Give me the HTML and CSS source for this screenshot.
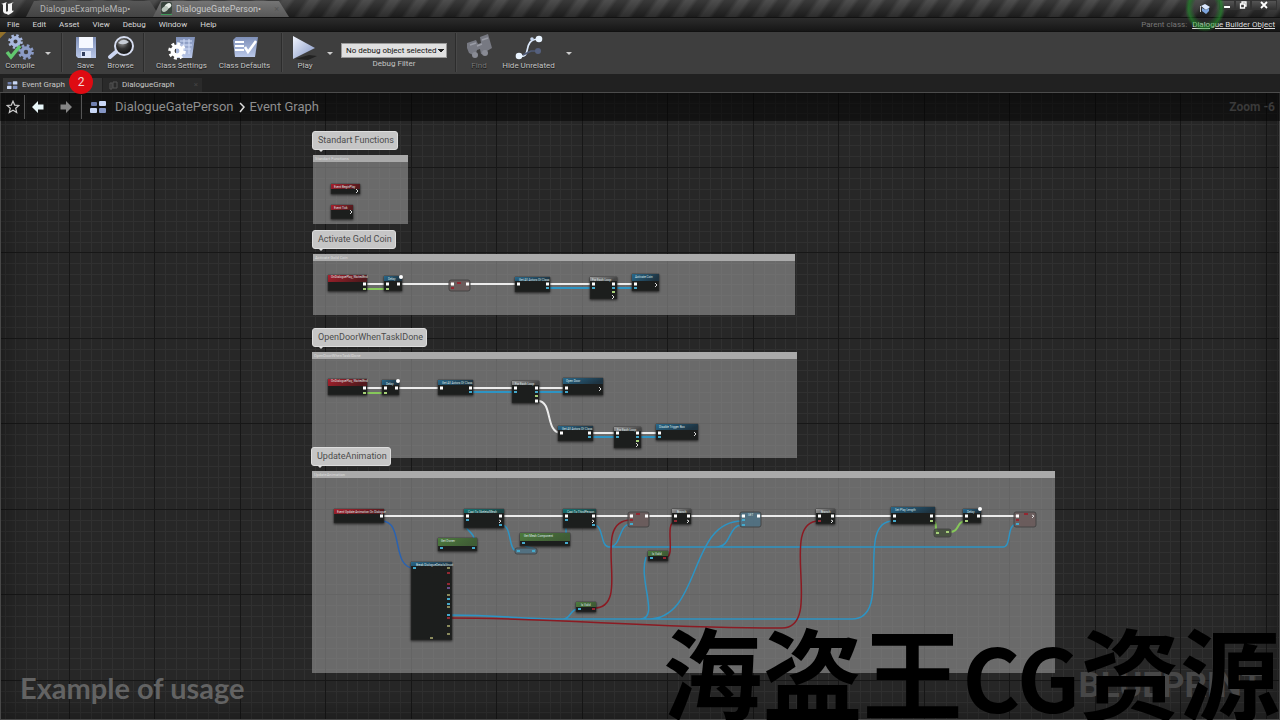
FILE: index.html
```html
<!DOCTYPE html>
<html lang="en">
<head>
<meta charset="utf-8">
<title>DialogueGatePerson</title>
<link rel="stylesheet" href="styles.css">
</head>
<body>
<svg class="defs" width="0" height="0" aria-hidden="true">
  <defs>
    <linearGradient id="steel" x1="0" y1="0" x2="1" y2="1"><stop offset="0" stop-color="#f2f6ff"/><stop offset="1" stop-color="#8194c4"/></linearGradient>
    <linearGradient id="steelDark" x1="0" y1="0" x2="0" y2="1"><stop offset="0" stop-color="#7f90b8"/><stop offset="1" stop-color="#b9c7e8"/></linearGradient>
    <radialGradient id="lens" cx=".4" cy=".3" r=".7"><stop offset="0" stop-color="#999"/><stop offset=".5" stop-color="#333"/><stop offset="1" stop-color="#111"/></radialGradient>
    <symbol id="gear" viewBox="-10 -10 20 20">
      <circle r="5" fill="none" stroke="currentColor" stroke-width="4.5"/>
      <circle r="8" fill="none" stroke="currentColor" stroke-width="3.6" stroke-dasharray="3.2 3.08"/>
    </symbol>
    <symbol id="blocks" viewBox="0 0 17 13">
      <rect x="1" y="1" width="6" height="4" rx="1" fill="#6f7fae"/><rect x="9" y="0" width="7" height="5" rx="1" fill="#c9d7f6"/>
      <rect x="0" y="7" width="7" height="5" rx="1" fill="#c9d7f6"/><rect x="9" y="7" width="7" height="5" rx="1" fill="#8495c4"/>
    </symbol>
  </defs>
</svg>

<header class="titlebar">
  <svg class="logo" viewBox="0 0 18 18"><path d="M1 4C3 3 5 3 7 2c-1 1-1 2-1 3v6c0 1 1 1 2 0V5c0-1 0-1-1-1 2 0 4-1 7-2-2 1-2 2-2 3v5c0 1 1 1 2 .5C13 13 10 14 8 15l-1-1c-2 0-4-1-4-3V5C3 4 2 4 1 4z" fill="#f4f4f4"/></svg>
  <div class="doc-tabs">
    <button class="doc-tab">DialogueExampleMap•</button>
    <button class="doc-tab active">
      <svg width="13" height="15" viewBox="0 0 13 15"><rect x="1" y="1" width="11" height="12" rx="2" fill="#38443c"/><ellipse cx="8" cy="5" rx="3.5" ry="2.5" fill="#e9efe9" transform="rotate(-35 8 5)"/><ellipse cx="5" cy="8" rx="3.5" ry="2.5" fill="#b8c4ba" transform="rotate(-35 5 8)"/><path d="M1 13.5h11" stroke="#3d9a58"/></svg>
      <span>DialogueGatePerson•</span><span class="tab-close">×</span>
    </button>
  </div>
  <div class="halo"><svg width="12" height="12" viewBox="0 0 12 12"><path d="M2 3l4-2 5 3-4 3z" fill="#dbe8ff"/><path d="M3 5v3l4 3 3-3V5L7 7z" fill="#7da4dc"/><path d="M1.500 3v6" stroke="#ccc"/></svg></div>
  <div class="win-buttons">
    <button aria-label="Minimize"><svg width="10" height="8"><path d="M2 6h6" stroke="#fff" stroke-width="2"/></svg></button>
    <button aria-label="Restore"><svg width="10" height="8"><path d="M4 2.5V1h4v4H6.500M2.500 3h4v4h-4z" stroke="#fff" fill="none" stroke-width="1.300"/></svg></button>
    <button class="wide" aria-label="Close"><svg width="10" height="8"><path d="M2 1l6 6M8 1L2 7" stroke="#fff" stroke-width="1.800"/></svg></button>
  </div>
</header>

<nav class="menubar">
  <button>File</button><button>Edit</button><button>Asset</button><button>View</button><button>Debug</button><button>Window</button><button>Help</button>
  <p class="parent">Parent class: <a href="#">Dialogue Builder Object</a></p>
</nav>

<div class="toolbar">
  <button class="tool compile">
    <svg width="32" height="28" viewBox="0 0 32 28"><g color="#a9b9df"><use href="#gear" x="4" y="1" width="15" height="15"/></g><g color="#8b9bc6"><use href="#gear" x="14" y="11" width="16" height="16"/></g><path d="M3 19l4 5 9-11" fill="none" stroke="#62c76f" stroke-width="3.500"/></svg>
    Compile</button>
  <button class="drop" aria-label="Compile options"></button>
  <i class="sep"></i>
  <button class="tool save">
    <svg width="32" height="28" viewBox="0 0 32 28"><path d="M6 4h20v21H8l-2-2z" fill="url(#steelDark)"/><path d="M9 4h14v11H9z" fill="#f5f8ff"/><path d="M11 18h10v7H11z" fill="#dfe7fa"/><path d="M12 19h3v4h-3z" fill="#33405f"/></svg>
    Save</button>
  <button class="tool save">
    <svg width="32" height="28" viewBox="0 0 32 28"><path d="M12 18l-7 6" stroke="#cbd6f2" stroke-width="4" stroke-linecap="round"/><circle cx="19" cy="13" r="9" fill="url(#lens)" stroke="#d6ddf0" stroke-width="2"/><path d="M13 10q5-6 11-1-5 4-11 1z" fill="#c8cdd6"/></svg>
    Browse</button>
  <i class="sep"></i>
  <button class="tool settings">
    <svg width="32" height="28" viewBox="0 0 32 28"><path d="M10 4h19l-3 21H10z" fill="url(#steelDark)"/><path d="M14 8h12M14 12h12M14 16h11M18 6v15M23 6v15" stroke="#d2ddf7" stroke-width="1"/><g color="#fff"><use href="#gear" x="2" y="9" width="18" height="18"/></g></svg>
    Class Settings</button>
  <button class="tool settings">
    <svg width="32" height="28" viewBox="0 0 32 28"><path d="M4 7l3-3h22l-3 20H6z" fill="url(#steelDark)"/><path d="M6 9h9M6 13h9M6 17h9" stroke="#fff" stroke-width="2"/><path d="M16 14l3 5 8-11" stroke="#fff" stroke-width="2.500" fill="none"/></svg>
    Class Defaults</button>
  <i class="sep"></i>
  <button class="tool play">
    <svg width="32" height="28" viewBox="0 0 32 28"><path d="M6 26l14-4 8 1-9 4z" fill="#222"/><path d="M4 3l22 12L4 26z" fill="url(#steel)"/></svg>
    Play</button>
  <button class="drop play-drop" aria-label="Play options"></button>
  <div class="filter">
    <select id="debug"><option>No debug object selected</option></select>
    <label for="debug">Debug Filter</label>
  </div>
  <i class="sep"></i>
  <button class="tool find" disabled>
    <svg width="32" height="28" viewBox="0 0 32 28"><path d="M4 10l9-3 2 4 3-1-1-6 8-3 4 14-5 3-1 4-5-1-1-5-3 1-2 6-6-3-2-5z" fill="#777982"/><path d="M7 12l6-2M19 7l6-2M14 13l5-2" stroke="#9a9ca5" stroke-width="1.500"/><circle cx="12" cy="22" r="3" fill="#898b94"/><circle cx="22" cy="20" r="3" fill="#898b94"/></svg>
    Find</button>
  <button class="tool hide">
    <svg width="32" height="28" viewBox="0 0 32 28"><path d="M6 23c14 3 2-17 20-17" fill="none" stroke="#dce9fb" stroke-width="1.700"/><path d="M10 22l8-4h8" stroke="#4f5a76" fill="none" stroke-width="1.700"/><circle cx="6" cy="23" r="3.300" fill="#e9f4ff"/><circle cx="26" cy="6" r="3.300" fill="#e9f4ff"/><circle cx="19" cy="6" r="1.800" fill="#c6d6ef"/><circle cx="25" cy="18" r="3" fill="#55607e"/></svg>
    Hide Unrelated</button>
  <button class="drop" aria-label="Hide options"></button>
</div>

<div class="graph-tabs">
  <button class="graph-tab current"><svg width="11" height="9"><use href="#blocks"/></svg>Event Graph</button>
  <button class="graph-tab"><svg width="9" height="9"><path d="M1 2h2v6H1zM4 1h4v6H4z" fill="none" stroke="#555"/></svg>DialogueGraph<span>×</span></button>
  <span class="badge">2</span>
</div>

<main class="graph">
  <svg class="grid" width="100%" height="100%">
    <defs><pattern id="g" x="69" y="74" width="171" height="171" patternUnits="userSpaceOnUse">
      <path class="minor" d="M11.500 0v171M22.500 0v171M32.500 0v171M43.500 0v171M54.500 0v171M64.500 0v171M75.500 0v171M96.500 0v171M107.500 0v171M117.500 0v171M128.500 0v171M139.500 0v171M149.500 0v171M160.500 0v171M0 11.500h171M0 22.500h171M0 32.500h171M0 43.500h171M0 54.500h171M0 64.500h171M0 75.500h171M0 96.500h171M0 107.500h171M0 117.500h171M0 128.500h171M0 139.500h171M0 149.500h171M0 160.500h171"/>
      <path class="major" d="M.500 0v171M85.500 0v171M0 .500h171M0 85.500h171"/>
    </pattern></defs>
    <rect width="100%" height="100%" fill="url(#g)"/>
  </svg>

  <section class="comment c1"><h2>Standart Functions</h2></section>
  <section class="comment c2"><h2>Activate Gold Coin</h2></section>
  <section class="comment c3"><h2>OpenDoorWhenTaskIDone</h2></section>
  <section class="comment c4"><h2>UpdateAnimation</h2></section>

  <svg class="nodes" width="1280" height="627" viewBox="0 93 1280 627">
    <defs>
      <linearGradient id="hr" x2="1" y2=".3"><stop offset="0" stop-color="#a8202c"/><stop offset="1" stop-color="#521a1d"/></linearGradient>
      <linearGradient id="hb" x2="1" y2=".3"><stop offset="0" stop-color="#28688a"/><stop offset="1" stop-color="#1e3442"/></linearGradient>
      <linearGradient id="ht" x2="1" y2=".3"><stop offset="0" stop-color="#137070"/><stop offset="1" stop-color="#1c4545"/></linearGradient>
      <linearGradient id="hg" x2="1" y2=".3"><stop offset="0" stop-color="#4c7a3d"/><stop offset="1" stop-color="#3f5c35"/></linearGradient>
      <linearGradient id="hw" x2="1" y2=".3"><stop offset="0" stop-color="#999"/><stop offset="1" stop-color="#444"/></linearGradient>
    </defs>
    <g class="wire green"><path d="M366 289H386M366 393H385M933 521C938 521 934 532 938 532M950 532C960 532 956 521 966 521"/></g>
    <g class="wire blue"><path d="M549 288H592M616 288H635M472 392H514M538 392H566M592 437H616M640 437H659"/></g>
    <g class="wire thin blue">
      <path d="M467 521C462 532 476 530 474 543M502 525C512 525 508 551 517 551M534 551C538 546 522 549 524 543M566 521V540"/>
      <path d="M594 525C604 525 600 547 609 547H1003C1012 547 1006 524 1017 524M609 547C622 547 618 524 631 524M716 547C732 547 728 525 742 525"/>
      <path d="M449 615C500 615 520 619 560 619H852C894 619 854 521 893 521M563 619C571 619 570 609 578 609M640 619C660 619 638 580 646 557M648 619C702 619 688 521 742 521"/>
    </g>
    <g class="wire thin red"><path d="M449 618C560 618 650 628 782 628C825 628 777 521 819 521M594 608C634 608 588 520 631 520M666 557C676 557 664 522 675 522"/></g>
    <path class="wire thin navy" d="M382 521C404 521 391 568 414 568"/>
    <path class="wire exec" d="M366 284H387M399 284H452M467 284H518M548 284H592M615 284H635M366 388H385M397 388H441M471 388H515M537 388H566M538 401C553 401 545 433 561 433M591 433H616M639 433H659M382 516H466M502 516H566M594 516H631M646 516H675M690 516H742M759 516H819M833 516H893M933 516H966M978 516H1017"/>

    <g class="bodies">
      <path d="M331 184h29v10h-29zM331 205h22v14h-22zM328 275h39v16h-39zM384 276h18v15h-18zM515 277h35v15h-35zM590 277h27v22h-27zM632 274h27v17h-27z"/>
      <path d="M328 379h39v16h-39zM382 380h17v15h-17zM438 380h35v15h-35zM512 381h27v22h-27zM563 378h40v17h-40zM558 426h35v15h-35zM614 427h27v21h-27zM656 424h42v16h-42z"/>
      <path d="M334 509h50v14h-50zM464 509h40v19h-40zM438 538h39v13h-39zM520 533h50v13h-50zM411 562h41v78h-41zM563 509h33v19h-33zM672 509h19v15h-19zM816 509h19v15h-19zM891 507h44v17h-44zM963 509h18v14h-18zM648 551h20v10h-20zM576 602h20v10h-20z"/>
    </g>
    <path fill="url(#hr)" d="M331 184h29v5h-29z"/><path fill="url(#hr)" d="M331 205h22v5h-22z"/>
    <path fill="url(#hr)" d="M328 275h39v7h-39z"/><path fill="url(#hr)" d="M328 379h39v7h-39z"/><path fill="url(#hr)" d="M334 509h50v5h-50z"/>
    <path fill="url(#hb)" d="M384 276h18v5h-18z"/><path fill="url(#hb)" d="M515 277h35v4h-35z"/><path fill="url(#hb)" d="M632 274h27v7h-27z"/>
    <path fill="url(#hb)" d="M382 380h17v5h-17z"/><path fill="url(#hb)" d="M438 380h35v5h-35z"/><path fill="url(#hb)" d="M563 378h40v6h-40z"/>
    <path fill="url(#hb)" d="M558 426h35v4h-35z"/><path fill="url(#hb)" d="M656 424h42v6h-42z"/><path fill="url(#hb)" d="M411 562h41v4h-41z"/>
    <path fill="url(#hb)" d="M891 507h44v6h-44z"/><path fill="url(#hb)" d="M963 509h18v4h-18z"/>
    <path fill="url(#ht)" d="M464 509h40v4h-40z"/><path fill="url(#ht)" d="M563 509h33v4h-33z"/>
    <path fill="url(#hg)" d="M438 538h39v8h-39z"/><path fill="url(#hg)" d="M520 533h50v8h-50z"/><path fill="url(#hg)" d="M648 551h20v5h-20z"/><path fill="url(#hg)" d="M576 602h20v5h-20z"/>
    <path fill="url(#hw)" d="M590 277h27v4h-27z"/><path fill="url(#hw)" d="M512 381h27v4h-27z"/><path fill="url(#hw)" d="M614 427h27v4h-27z"/><path fill="url(#hw)" d="M672 509h19v4h-19z"/><path fill="url(#hw)" d="M816 509h19v4h-19z"/>
    <g class="set"><rect class="r" x="449" y="280" width="21" height="11" rx="2"/><rect class="r" x="628" y="512" width="21" height="15" rx="2"/><rect class="b" x="740" y="512" width="21" height="15" rx="2"/><rect class="r" x="1014" y="512" width="22" height="15" rx="2"/><rect class="b" x="515" y="548" width="22" height="6" rx="2"/><rect class="g" x="934" y="529" width="17" height="8" rx="2"/></g>

    <path class="pin exec" d="M363 284h3M386 284h3M397 284h3M451 284h3M466 284h3M517 284h3M546 284h3M592 284h3M612 284h3M634 284h3M363 388h3M384 388h3M395 388h3M440 388h3M469 388h3M514 388h3M535 388h3M535 401h3M565 388h3M560 433h3M588 433h3M616 433h3M636 433h3M658 433h3M380 516h3M466 516h3M499 516h3M565 516h3M592 516h3M630 516h3M645 516h3M674 516h3M687 516h3M742 516h3M757 516h3M818 516h3M831 516h3M893 516h3M930 516h3M965 516h3M977 516h3M1016 516h3"/>
    <path class="arrow" d="M356 189l2 2-2 2M350 210l2 2-2 2M612 295l2 2-2 2M655 283l2 2-2 2M599 387l2 2-2 2M636 443l2 2-2 2M694 432l2 2-2 2M499 520l2 1-2 2M592 520l2 1-2 2M687 520l2 1-2 2M831 520l2 1-2 2M1032 515l2 1-2 2"/>
    <path class="pin cyan" d="M546 288h3M592 288h3M612 288h3M634 288h3M469 392h3M514 392h3M535 392h3M565 392h3M588 437h3M616 437h3M636 437h3M658 437h3M466 520h3M499 525h3M565 520h3M592 525h3M630 524h3M742 520h3M742 525h3M893 521h3M472 548h3M440 548h3M522 543h3M565 543h3M517 551h3M532 551h3M650 558h3M578 609h3M447 615h3M447 599h3M447 604h3M413 568h3M1016 524h3"/>
    <path class="pin lime" d="M363 289h3M386 289h3M363 393h3M384 393h3M930 521h3M965 521h3M936 533h3M946 532h3M612 292h3M535 396h3M636 441h3"/>
    <path class="pin olive" d="M447 568h3M447 595h3M447 607h3M447 626h3M447 634h3M430 638h3"/>
    <path class="pin crimson" d="M447 573h3M447 584h3M447 618h3M451 288h3M663 558h3M592 609h3M630 520h3M674 521h3M818 521h3M1016 520h3M457 283h4M636 514h4M1024 514h4"/>
    <path class="pin violet" d="M447 588h3"/>
    <g class="bead"><circle cx="401" cy="277" r="2"/><circle cx="398" cy="381" r="2"/><circle cx="980" cy="509" r="2"/></g>

    <g class="tiny">
      <text x="334" y="188">Event BeginPlay</text><text x="334" y="209">Event Tick</text>
      <text x="331" y="278">OnDialoguePlay_WaitedEnd</text><text x="388" y="280">Delay</text><text x="519" y="281">Get All Actors Of Class</text><text x="592" y="281">For Each Loop</text><text x="635" y="278">Activate Coin</text>
      <text x="331" y="382">OnDialoguePlay_WaitedEnd</text><text x="386" y="385">Delay</text><text x="442" y="384">Get All Actors Of Class</text><text x="515" y="385">For Each Loop</text><text x="566" y="382">Open Door</text>
      <text x="562" y="430">Get All Actors Of Class</text><text x="617" y="431">For Each Loop</text><text x="659" y="428">Disable Trigger Box</text>
      <text x="337" y="513">Event Update Animation On Dialogue</text><text x="468" y="513">Cast To SkeletalMesh</text><text x="567" y="513">Cast To ThirdPerson</text><text x="677" y="513">Branch</text><text x="821" y="513">Branch</text><text x="895" y="511">Set Play Length</text><text x="967" y="513">Delay</text>
      <text x="441" y="542">Get Owner</text><text x="524" y="537">Get Mesh Component</text><text x="652" y="555">Is Valid</text><text x="581" y="606">Is Valid</text><text x="416" y="566">Break DialogueDetailsStruct</text>
      <text x="748" y="516">SET</text>
    </g>
  </svg>

  <div class="shade"></div>
  <span class="bubble b1">Standart Functions</span>
  <span class="bubble b2">Activate Gold Coin</span>
  <span class="bubble b3">OpenDoorWhenTaskIDone</span>
  <span class="bubble b4">UpdateAnimation</span>

  <div class="crumbs">
    <button class="crumb-icon" aria-label="Favorite"><svg width="14" height="14" viewBox="0 0 14 14"><path d="M7 1.200l1.700 3.900 4.200.4-3.200 2.800 1 4.200L7 10.300l-3.700 2.200 1-4.200L1.100 5.500l4.200-.4z" fill="none" stroke="#ccc" stroke-width="1.200"/></svg></button>
    <i class="bar"></i>
    <button class="crumb-icon back" aria-label="Back"><svg width="12" height="14" viewBox="0 0 12 14"><path d="M0 7l6-6v3.500h5.500v5H6V13z" fill="#e8f6f8"/></svg></button>
    <button class="crumb-icon next" aria-label="Forward"><svg width="12" height="14" viewBox="0 0 12 14"><path d="M12 7L6 1v3.500H.5v5H6V13z" fill="#858585"/></svg></button>
    <i class="bar"></i>
    <svg class="crumb-blocks" width="17" height="13"><use href="#blocks"/></svg>
    <span>DialogueGatePerson</span>
    <svg class="chev" width="8" height="12"><path d="M2 2l4 4-4 5" fill="none" stroke="#ddd" stroke-width="1.500"/></svg>
    <span>Event Graph</span>
    <span class="zoom">Zoom -6</span>
  </div>
  <p class="caption">Example of usage</p>
  <p class="kind">BLUEPRINT</p>
  <p class="watermark" lang="zh">海盗王<span class="latin">CG</span>资源</p>
</main>
</body>
</html>
```
FILE: styles.css
```css
* { box-sizing: border-box; }
html, body { height: 100%; }
body {
  margin: 0;
  display: flex;
  flex-direction: column;
  overflow: hidden;
  background: #212121;
  color: #c8c8c8;
  font: 8px/10px Roboto, "Liberation Sans", sans-serif;
}
button {
  padding: 0;
  border: 0;
  background: none;
  color: inherit;
  font: inherit;
}
p, h2 { margin: 0; }
svg { display: block; flex: none; }
.defs { position: absolute; }

.titlebar {
  position: relative;
  display: flex;
  flex: none;
  height: 18px;
  background:
    linear-gradient(rgba(90, 90, 90, .4), rgba(20, 20, 20, .5)),
    repeating-linear-gradient(125deg, #242424 0 8px, #464646 12px 18px, #242424 22px);
  border-bottom: 1px solid #111;
}
.logo { width: 18px; height: 18px; }
.doc-tabs { display: flex; margin-left: 8px; }
.doc-tab {
  display: flex;
  align-items: center;
  width: 134px;
  padding-left: 14px;
  background: linear-gradient(#595959, #434343);
  clip-path: polygon(8px 1px, calc(100% - 10px) 1px, 100% 100%, 0 100%);
  color: #b4b4b4;
  font-size: 9px;
}
.doc-tab.active {
  gap: 3px;
  width: 136px;
  margin-left: -7px;
  padding-left: 7px;
  background: linear-gradient(#777, #585858);
  color: #c8c8c8;
}
.tab-close { margin-left: auto; padding-right: 10px; color: #555; }
.halo {
  position: absolute;
  top: -16px;
  right: 55px;
  z-index: 3;
  display: grid;
  place-items: center;
  width: 40px;
  height: 48px;
  padding-top: 2px;
  border-radius: 50%;
  background: radial-gradient(closest-side, transparent 55%, rgba(30, 150, 40, .6) 82%, transparent);
  pointer-events: none;
}
.win-buttons { display: flex; height: 10px; margin-left: auto; padding-right: 3px; }
.win-buttons button {
  display: grid;
  place-items: center;
  width: 16px;
  border: 1px solid #333;
  background: linear-gradient(#555, #333);
}
.win-buttons .wide { width: 26px; }

.menubar {
  display: flex;
  flex: none;
  align-items: center;
  gap: 13px;
  height: 14px;
  padding: 0 5px 0 7px;
  background: linear-gradient(#2c2c2c, #161616);
  border-bottom: 1px solid #111;
  color: #d8d8d8;
}
.parent { margin-left: auto; color: #777; }
.parent a { margin-left: 3px; color: #ddd; }

.toolbar {
  display: flex;
  flex: none;
  height: 42px;
  background: #3e3e3e;
  color: #c4c4c4;
}
.tool {
  display: flex;
  flex-direction: column;
  align-items: center;
  padding-top: 1px;
  text-shadow: 0 1px 1px #111;
}
.compile { width: 40px; background: linear-gradient(135deg, #92702a 4px, transparent 5px); }
.save { width: 35px; }
.settings { width: 63px; }
.play { width: 34px; }
.find { width: 34px; color: #777; }
.hide { width: 65px; }
.drop { display: grid; place-items: center; width: 16px; }
.drop::before { content: ""; border: 3px solid transparent; border-top-color: #ccc; border-bottom: 0; }
.sep { width: 2px; margin: 1px 5px 2px; background: #2c2c2c; border-right: 1px solid #484848; }
.filter {
  display: flex;
  flex-direction: column;
  align-items: center;
  gap: 1px;
  padding: 11px 3px 0;
}
.filter select {
  appearance: none;
  width: 106px;
  height: 15px;
  padding: 0 4px;
  border: 1px solid #999;
  border-radius: 0;
  background:
    conic-gradient(from -45deg at 50% 100%, #222 90deg, transparent 0) 96px 5px / 6px 3px no-repeat,
    #e0e0e0;
  color: #111;
  font: inherit;
}

.graph-tabs {
  position: relative;
  display: flex;
  flex: none;
  gap: 1px;
  height: 19px;
  padding: 4px 3px 0;
  border-bottom: 1px solid #4c4c4c;
}
.graph-tab {
  display: flex;
  align-items: center;
  gap: 4px;
  width: 99px;
  padding: 0 4px;
  background: #2a2a2a;
}
.graph-tab:nth-child(2) { padding-left: 6px; }
.graph-tab span { margin-left: auto; color: #444; }
.graph-tab.current { background: #373737; }
.badge {
  position: absolute;
  top: -4px;
  left: 69px;
  z-index: 4;
  width: 24px;
  height: 24px;
  border-radius: 50%;
  background: #de0b12;
  color: #f4d8d8;
  font-size: 12px;
  line-height: 24px;
  text-align: center;
}

.graph {
  position: relative;
  flex: 1;
  overflow: hidden;
  background: #272727;
}
.grid, .nodes, .shade { position: absolute; top: 0; left: 0; }
.minor { stroke: #303030; fill: none; }
.major { stroke: #171717; fill: none; }
.shade {
  right: 0;
  bottom: 0;
  border: 1px solid #484848;
  border-top: 0;
  box-shadow: inset 0 0 34px rgba(0, 0, 0, .4);
}

.comment { position: absolute; background: rgba(152, 152, 152, .6); }
.comment h2 {
  height: 7px;
  overflow: hidden;
  padding-left: 2px;
  background: #aaa;
  color: #ddd;
  font-size: 4px;
  font-weight: 400;
  line-height: 7px;
}
.c1 { left: 313px; top: 62px; width: 95px; height: 69px; }
.c2 { left: 313px; top: 161px; width: 482px; height: 61px; }
.c3 { left: 312px; top: 259px; width: 485px; height: 106px; }
.c4 { left: 312px; top: 378px; width: 743px; height: 202px; }

.bubble {
  position: absolute;
  padding: 3px 3px 3px 5px;
  border: 1px solid #ddd;
  border-radius: 3px;
  background: #c6c6c6;
  color: #4c4c4c;
  font-size: 9px;
  line-height: 11px;
}
.bubble::after {
  content: "";
  position: absolute;
  top: 100%;
  left: 5px;
  border: 3px solid transparent;
  border-top-color: #ddd;
  border-bottom: 0;
}
.b1 { left: 312px; top: 38px; }
.b2 { left: 312px; top: 137px; }
.b3 { left: 312px; top: 235px; }
.b4 { left: 311px; top: 354px; }

.wire { fill: none; stroke-width: 2; }
.thin { stroke-width: 1.5; }
.wire.exec { stroke: #ececec; }
.blue { stroke: #2d94c4; }
.red { stroke: #8b1a22; }
.green { stroke: #86c85a; }
.navy { stroke: #2a62b0; }
.bodies { fill: #1c1e1d; stroke: #333; stroke-width: .5; filter: drop-shadow(0 1px 1px rgba(0, 0, 0, .6)); }
.set { stroke: #444; fill-opacity: .75; }
.r { fill: #6b5858; }
.b { fill: #4b7388; }
.g { fill: #3e4c36; }
.pin { fill: none; stroke-width: 2; }
.pin.exec { stroke: #fff; stroke-width: 3; }
.cyan { stroke: #45a9cb; }
.lime { stroke: #a6cf78; }
.olive { stroke: #8a8a5c; }
.crimson { stroke: #932832; }
.violet { stroke: #68508d; }
.arrow { fill: none; stroke: #ddd; stroke-width: 1; }
.bead { fill: #fff; }
.tiny { fill: #dfe6e8; font-size: 3px; }

.crumbs {
  position: absolute;
  top: 0;
  left: 0;
  right: 0;
  display: flex;
  align-items: center;
  height: 28px;
  padding: 0 5px 0 6px;
  background: rgba(0, 0, 0, .5);
  color: #8e8e8e;
  font-size: 13px;
  line-height: 16px;
}
.bar { width: 1px; height: 24px; margin-left: 4px; background: #555; }
.back { margin-left: 7px; }
.next { margin-left: 16px; }
.next + .bar { margin-left: 9px; }
.crumb-blocks { margin: 0 8px; }
.chev { margin: 0 4px; }
.zoom { margin-left: auto; color: #3a3a3a; font-size: 12px; font-weight: 700; }

.caption {
  position: absolute;
  left: 20px;
  bottom: 16px;
  color: #636363;
  font: 700 29px/32px Lato, sans-serif;
}
.kind {
  position: absolute;
  right: 17px;
  bottom: 12px;
  color: #474747;
  font-size: 35px;
  font-weight: 700;
  line-height: 44px;
}
.watermark {
  position: absolute;
  right: 0;
  bottom: 0;
  color: #000;
  font: 700 100px/100px "Noto Sans CJK SC", sans-serif;
  white-space: nowrap;
}
.latin { font-size: 88px; line-height: 88px; }
```
